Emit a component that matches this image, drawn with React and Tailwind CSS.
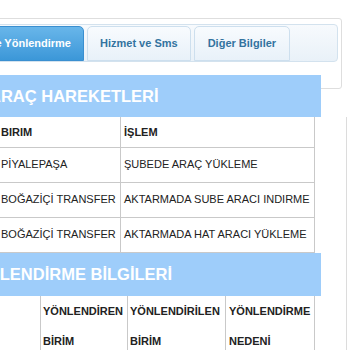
import React from 'react';

const font = { fontFamily: '"Liberation Sans", Arial, sans-serif' };

const moves = [
  ['PİYALEPAŞA', 'ŞUBEDE ARAÇ YÜKLEME'],
  ['BOĞAZİÇİ TRANSFER', 'AKTARMADA SUBE ARACI INDIRME'],
  ['BOĞAZİÇİ TRANSFER', 'AKTARMADA HAT ARACI YÜKLEME'],
];

function Tabs() {
  return (
    <div className="-ml-[100px] mt-[18px] h-[71px] w-[442px] shrink-0 rounded-[3px] border border-[#dedede] bg-white pt-[5px] pl-[4px] pr-[3px]">
      <div className="flex h-[38px] items-end gap-[3px] rounded-[4px] border border-[#d3e2ee] bg-gradient-to-b from-[#f7fafd] to-[#e9f1f8] pl-[3px]">
        <div className="flex h-[35px] w-[175px] items-center justify-end rounded-t-[5px] border border-[#3a8fd0] bg-gradient-to-b from-[#68b6ea] to-[#3b97d8] pr-[12px] text-[11px] font-bold text-white">
          Hareket ve Yönlendirme
        </div>
        <div className="flex h-[35px] items-center rounded-t-[5px] border border-[#cddfee] bg-gradient-to-b from-[#f8fbfe] to-[#e8f1f9] px-[12px] text-[11px] font-bold text-[#33739f]">
          Hizmet ve Sms
        </div>
        <div className="flex h-[35px] items-center rounded-t-[5px] border border-[#cddfee] bg-gradient-to-b from-[#f8fbfe] to-[#e8f1f9] px-[13px] text-[11px] font-bold text-[#33739f]">
          Diğer Bilgiler
        </div>
      </div>
    </div>
  );
}

export default function App() {
  return (
    <div className="flex h-[350px] w-[350px] flex-col overflow-hidden bg-white text-[#222]" style={font}>
      <Tabs />

      <div className="-mt-[14px] flex h-[42px] w-[341px] shrink-0 -ml-[20px] items-center bg-[#9ecdfa] pl-[9px] text-[16.5px] font-bold text-white">
        ARAÇ HAREKETLERİ
      </div>

      <div className="-ml-[40px] w-[387px] shrink-0 border-r border-[#dcdcdc]">
        <table className="ml-[36px] w-[319px] border-collapse text-[11px]">
          <tbody>
            <tr className="h-[30px]">
              <td className="w-[124px] border border-t-0 border-[#c9c9c9] pl-[4px] font-bold">BIRIM</td>
              <td className="border border-t-0 border-[#c9c9c9] pl-[3px] font-bold">İŞLEM</td>
            </tr>
            {moves.map((row, i) => (
              <tr key={i} className="h-[35px]">
                <td className="border border-[#c9c9c9] pl-[4px]">{row[0]}</td>
                <td className="border border-[#c9c9c9] pl-[3px]">{row[1]}</td>
              </tr>
            ))}
          </tbody>
        </table>

        <div className="ml-[-4px] flex h-[43px] w-[365px] items-center bg-[#9ecdfa] pl-[8px] text-[16.5px] font-bold text-white">
          YÖNLENDİRME BİLGİLERİ
        </div>

        <table className="ml-[36px] w-[319px] border-collapse text-[11px] font-bold leading-[30px]">
          <tbody>
            <tr>
              <td className="w-[44px] border border-t-0 border-[#c9c9c9] align-top"></td>
              <td className="w-[87px] border border-t-0 border-[#c9c9c9] pl-[2px] align-top">
                YÖNLENDİREN<br />BİRİM
              </td>
              <td className="w-[98px] border border-t-0 border-[#c9c9c9] pl-[2px] align-top">
                YÖNLENDİRİLEN<br />BİRİM
              </td>
              <td className="border border-t-0 border-[#c9c9c9] pl-[3px] align-top">
                YÖNLENDİRME<br />NEDENİ
              </td>
            </tr>
          </tbody>
        </table>
      </div>
    </div>
  );
}
